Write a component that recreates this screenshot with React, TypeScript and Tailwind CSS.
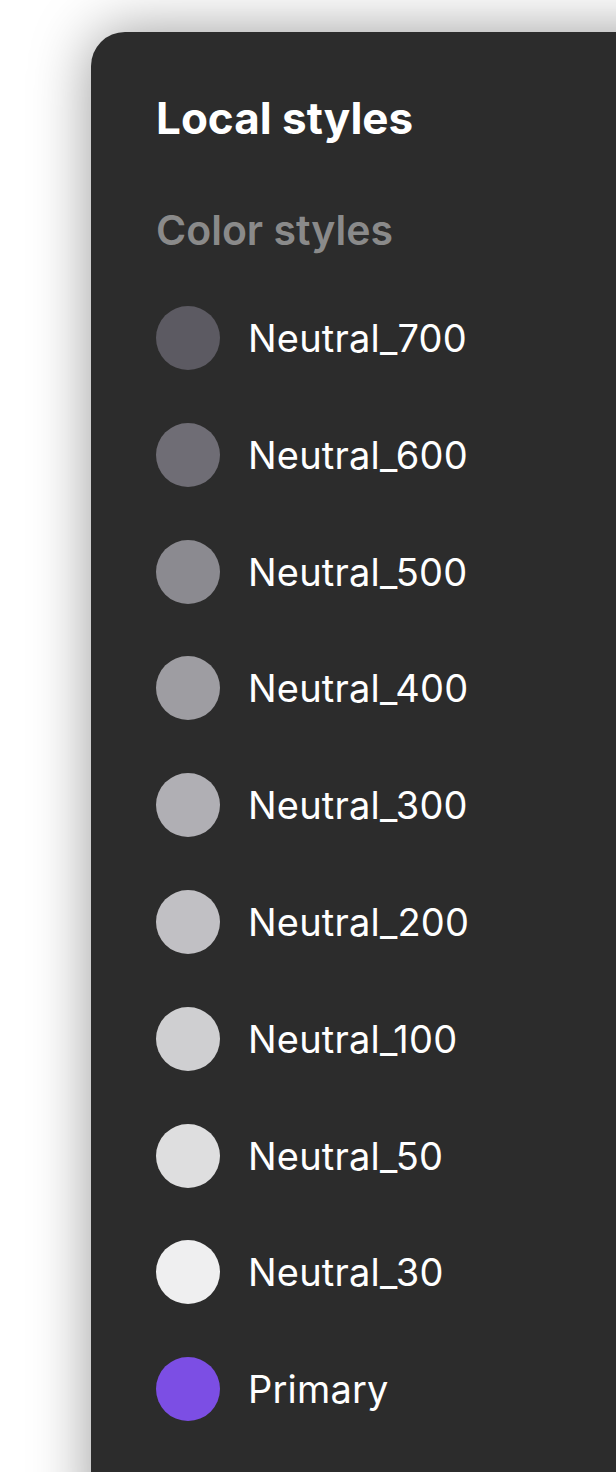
const styles = [
  { name: "Neutral_700", color: "bg-[#5c5a62]" },
  { name: "Neutral_600", color: "bg-[#6f6d75]" },
  { name: "Neutral_500", color: "bg-[#8b8a90]" },
  { name: "Neutral_400", color: "bg-[#9e9da2]" },
  { name: "Neutral_300", color: "bg-[#b0afb4]" },
  { name: "Neutral_200", color: "bg-[#c1c0c4]" },
  { name: "Neutral_100", color: "bg-[#cfcfd1]" },
  { name: "Neutral_50", color: "bg-[#dededf]" },
  { name: "Neutral_30", color: "bg-[#efeff0]" },
  { name: "Primary", color: "bg-[#7c4ee4]" },
];

export default function App() {
  return (
    <div className="h-[1472px] w-[616px] overflow-hidden bg-white pl-[91px] pt-[32px] font-['Inter',sans-serif]">
      <div className="h-[1500px] w-[600px] rounded-tl-[34px] bg-[#2c2c2c] pl-[65px] pt-[60px] shadow-[0_0_60px_rgba(0,0,0,0.4)]">
        {/* header */}
        <h1 className="text-[44px] font-bold leading-[52px] text-white">
          Local styles
        </h1>
        <h2 className="mt-[62px] text-[41px] font-semibold leading-[48px] text-[#8a8a8a]">
          Color styles
        </h2>

        {/* swatches */}
        <div className="mt-[52px] flex flex-col gap-[52.8px]">
          {styles.map((s) => (
            <div key={s.name} className="flex h-[64px] items-center gap-[28px]">
              <div className={`h-[64px] w-[64px] shrink-0 rounded-full ${s.color}`} />
              <span className="text-[38px] leading-none tracking-[0.2px] text-white">
                {s.name}
              </span>
            </div>
          ))}
        </div>
      </div>
    </div>
  );
}
